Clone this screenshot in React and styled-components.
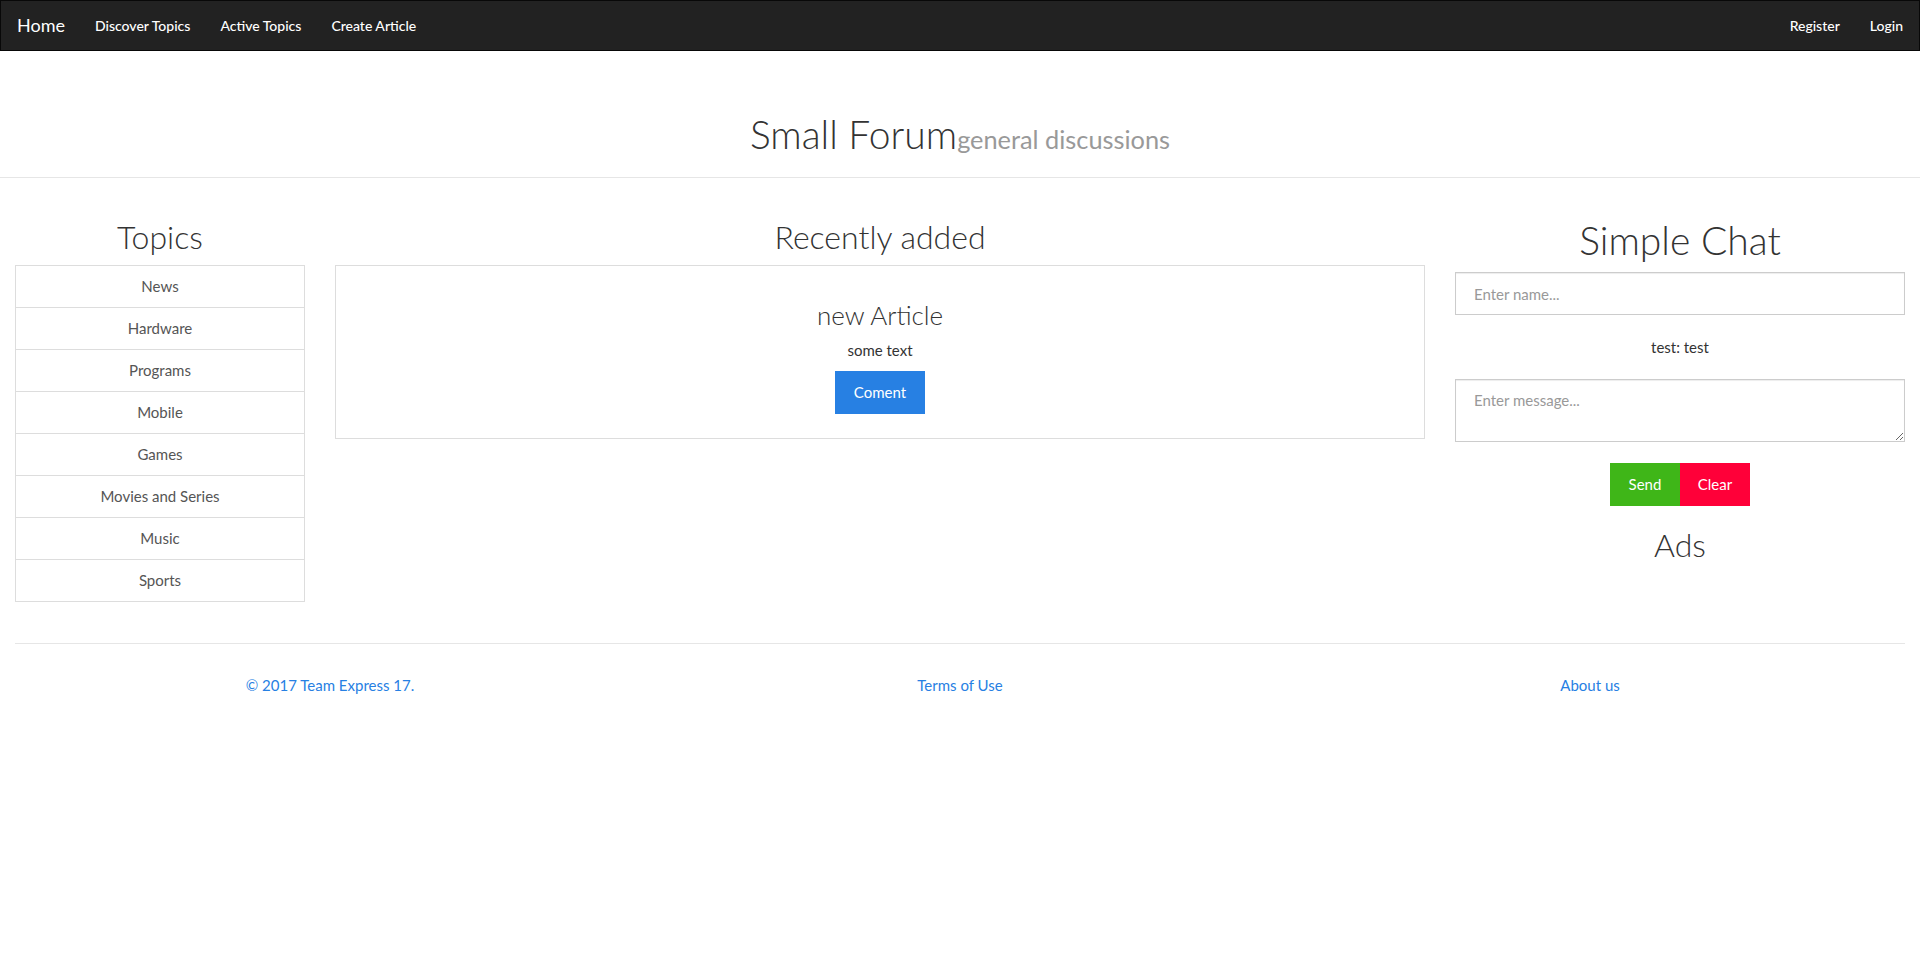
import React from "react";
import styled, { createGlobalStyle } from "styled-components";

const GlobalStyle = createGlobalStyle`
  * {
    box-sizing: border-box;
  }
  body {
    margin: 0;
    font-family: Lato, "Liberation Sans", sans-serif;
    font-size: 15px;
    line-height: 1.42857;
    color: #333;
    background: #fff;
  }
`;

const topics = [
  "News",
  "Hardware",
  "Programs",
  "Mobile",
  "Games",
  "Movies and Series",
  "Music",
  "Sports"
];

const App = () => {
  return (
    <>
      <GlobalStyle />

      {/* top navigation */}
      <Navbar>
        <NavGroup>
          <Brand href="#">Home</Brand>
          <NavLink href="#">Discover Topics</NavLink>
          <NavLink href="#">Active Topics</NavLink>
          <NavLink href="#">Create Article</NavLink>
        </NavGroup>
        <NavGroup>
          <NavLink href="#">Register</NavLink>
          <NavLink href="#">Login</NavLink>
        </NavGroup>
      </Navbar>

      <PageHeader>
        <h1>
          Small Forum<small>general discussions</small>
        </h1>
      </PageHeader>

      <MainRow>
        <Column>
          <Heading>Topics</Heading>
          <TopicList>
            {topics.map((topic) => (
              <TopicItem key={topic} href="#">{topic}</TopicItem>
            ))}
          </TopicList>
        </Column>

        <Column>
          <Heading>Recently added</Heading>
          <ArticleBox>
            <ArticleTitle>new Article</ArticleTitle>
            <ArticleText>some text</ArticleText>
            <Button $color="#2780e3">Coment</Button>
          </ArticleBox>
        </Column>

        <Column>
          <BigHeading>Simple Chat</BigHeading>
          <Input type="text" placeholder="Enter name..." />
          <ChatMessage>test: test</ChatMessage>
          <TextArea placeholder="Enter message..." />
          <ButtonRow>
            <Button $color="#3fb618" $wide>Send</Button>
            <Button $color="#ff0039" $wide>Clear</Button>
          </ButtonRow>
          <Heading>Ads</Heading>
        </Column>
      </MainRow>

      <FooterLine />
      <Footer>
        <FooterLink href="#">© 2017 Team Express 17.</FooterLink>
        <FooterLink href="#">Terms of Use</FooterLink>
        <FooterLink href="#">About us</FooterLink>
      </Footer>
    </>
  );
};

export default App;

const Navbar = styled.nav`
  height: 51px;
  background-color: #222;
  border: 1px solid #080808;
  display: flex;
  align-items: center;
  justify-content: space-between;
  padding: 0 1px 0 16px;
`;

const NavGroup = styled.div`
  display: flex;
  align-items: center;
  height: 100%;
`;

const Brand = styled.a`
  font-size: 18px;
  color: #fff;
  text-decoration: none;
  padding-right: 15px;
  line-height: 21px;
`;

const NavLink = styled.a`
  font-size: 14px;
  font-weight: 500;
  color: #fff;
  text-decoration: none;
  padding: 0 15px;
  line-height: 21px;
`;

const PageHeader = styled.div`
  padding: 62px 0 21px;
  border-bottom: 1px solid #e6e6e6;
  text-align: center;

  h1 {
    margin: 0;
    font-size: 39px;
    font-weight: 300;
    line-height: 43px;
    color: #333;
  }

  small {
    font-size: 65%;
    font-weight: 400;
    line-height: 0;
    color: #999;
  }
`;

const MainRow = styled.div`
  display: grid;
  grid-template-columns: 2fr 7fr 3fr;
  margin-top: 20px;
`;

const Column = styled.div`
  padding: 0 15px;
  text-align: center;
`;

const Heading = styled.h2`
  margin: 21px 0 10.5px;
  font-size: 32px;
  font-weight: 300;
  line-height: 1.1;
  color: #333;
`;

const BigHeading = styled.h1`
  margin: 21px 0 10.5px;
  font-size: 39px;
  font-weight: 300;
  line-height: 1.1;
  color: #333;
`;

const TopicList = styled.div`
  display: flex;
  flex-direction: column;
  border: 1px solid #ddd;
  margin-bottom: 20px;
`;

const TopicItem = styled.a`
  display: block;
  padding: 10px 15px;
  line-height: 21px;
  color: #555;
  text-decoration: none;

  & + & {
    border-top: 1px solid #ddd;
  }
`;

const ArticleBox = styled.div`
  border: 1px solid #ddd;
  padding: 14px 15px 24px;
`;

const ArticleTitle = styled.h3`
  margin: 21px 0 11px;
  font-size: 26px;
  font-weight: 300;
  line-height: 1.1;
  color: #333;
`;

const ArticleText = styled.p`
  margin: 0 0 10px;
  line-height: 21px;
`;

const Button = styled.button`
  display: inline-block;
  width: ${(p) => (p.$wide ? "70px" : "auto")};
  padding: 10px ${(p) => (p.$wide ? "0" : "18px")};
  font-family: inherit;
  font-size: 15px;
  line-height: 21px;
  color: #fff;
  background-color: ${(p) => p.$color};
  border: 1px solid ${(p) => p.$color};
  border-radius: 0;
  cursor: pointer;
`;

const Input = styled.input`
  display: block;
  width: 100%;
  height: 43px;
  padding: 10px 18px;
  font-family: inherit;
  font-size: 15px;
  color: #333;
  border: 1px solid #ccc;
  border-radius: 0;
  box-shadow: inset 0 1px 1px rgba(0, 0, 0, 0.075);

  &::placeholder {
    color: #999;
  }
`;

const ChatMessage = styled.p`
  margin: 22px 0 21px;
  line-height: 21px;
  color: #333;
`;

const TextArea = styled(Input).attrs({ as: "textarea" })`
  height: 63px;
  resize: vertical;
  line-height: 21px;
  margin: 0;
`;

const ButtonRow = styled.div`
  display: flex;
  justify-content: center;
  margin-top: 21px;
`;

const FooterLine = styled.hr`
  margin: 21px 15px;
  border: 0;
  border-top: 1px solid #e6e6e6;
`;

const Footer = styled.footer`
  display: grid;
  grid-template-columns: repeat(3, 1fr);
  padding: 10px 15px 0;
  text-align: center;
  line-height: 21px;
`;

const FooterLink = styled.a`
  color: #2780e3;
  text-decoration: none;
`;
